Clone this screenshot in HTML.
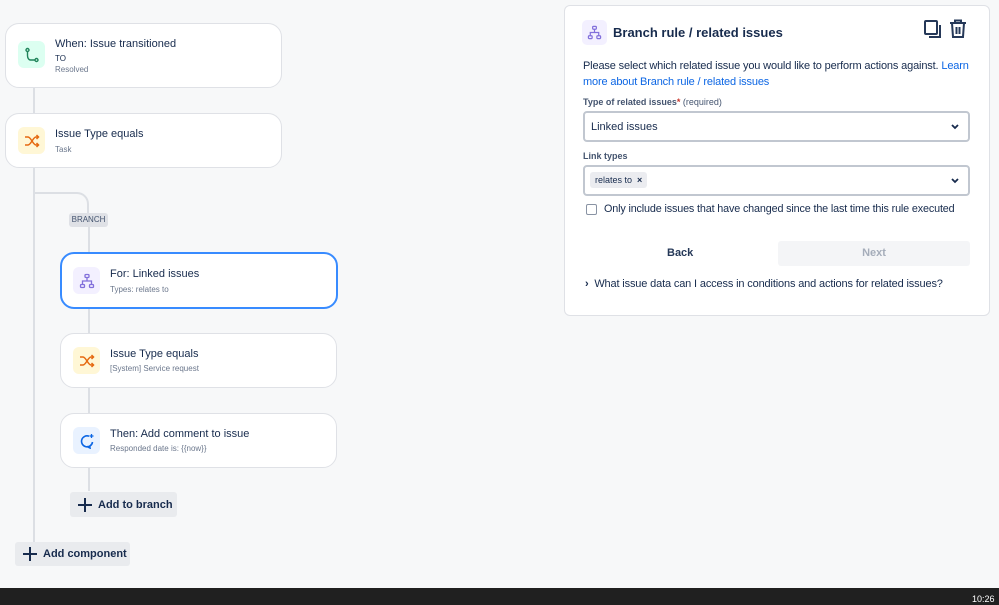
<!DOCTYPE html>
<html><head><meta charset="utf-8"><style>
*{box-sizing:border-box;margin:0;padding:0}
body{width:999px;height:605px;background:#f7f8f9;font-family:"Liberation Sans",Arial,sans-serif;color:#172b4d;position:relative;overflow:hidden;font-size:11px}
.abs{position:absolute}
.card{position:absolute;background:#fff;border:1px solid #dfe1e6;border-radius:14px}
.ic{position:absolute;width:27px;height:27px;border-radius:6px;left:12px;display:flex;align-items:center;justify-content:center}
.t{position:absolute;left:49px;font-size:11px;color:#172b4d}
.s{position:absolute;left:49px;font-size:8px;color:#6b778c}
.vl{position:absolute;width:2px;background:#dcdfe4}
.btn{position:absolute;background:#e9ebee;border-radius:3px;font-size:11px;font-weight:bold;color:#172b4d;display:flex;align-items:center}
.sel{position:absolute;left:583px;width:387px;height:31px;border:2px solid #c1c7d0;border-radius:4px;background:#fff;font-size:11px}
.pn{letter-spacing:-0.15px}
</style></head><body>
<div class="vl" style="left:33px;top:87px;height:456px"></div>
<div class="abs" style="left:33px;top:192px;width:56px;height:22px;border-top:2px solid #dcdfe4;border-right:2px solid #dcdfe4;border-top-right-radius:12px"></div>
<div class="vl" style="left:88px;top:226px;height:265px"></div>
<div class="abs" style="left:69px;top:213px;width:39px;height:14px;background:#dfe1e6;border-radius:3px;font-size:8px;color:#44546f;text-align:center;line-height:14px">BRANCH</div>

<div class="card" style="left:5px;top:23px;width:277px;height:65px">
<div class="ic" style="top:17px;background:#dcfff1"><svg width="16" height="16" viewBox="0 0 16 16" fill="none" stroke="#1f845a" stroke-width="1.4"><circle cx="3.5" cy="3" r="1.5"/><circle cx="12.5" cy="13" r="1.5"/><path d="M3.5 4.5v4c0 2 1 4.5 3 4.5h4.5"/></svg></div>
<div class="t" style="top:14px">When: Issue transitioned</div>
<div class="s" style="top:30px;color:#172b4d;font-size:8px">TO</div>
<div class="s" style="top:41px">Resolved</div></div>

<div class="card" style="left:5px;top:113px;width:277px;height:55px">
<div class="ic" style="top:13px;background:#fff7d6"><svg width="16" height="16" viewBox="0 0 16 16" fill="none" stroke="#e56910" stroke-width="1.5"><path d="M1 4h3c3 0 5 8 8 8h3M1 12h3c3 0 5-8 8-8h3M12.5 2l2 2-2 2M12.5 10l2 2-2 2"/></svg></div>
<div class="t" style="top:14px">Issue Type equals</div>
<div class="s" style="top:31px">Task</div></div>

<div class="card" style="left:60px;top:252px;width:278px;height:57px;border:2px solid #388bff">
<div class="ic" style="top:13px;left:11px;background:#f3f0ff"><svg width="16" height="16" viewBox="0 0 16 16" fill="none" stroke="#8270db" stroke-width="1.3"><rect x="6" y="1.5" width="4" height="3" rx="1"/><rect x="1.5" y="11.5" width="4" height="3" rx="1"/><rect x="10.5" y="11.5" width="4" height="3" rx="1"/><path d="M8 4.5v3.5M3.5 11.5V8h9v3.5"/></svg></div>
<div class="t" style="top:14px;left:48px">For: Linked issues</div>
<div class="s" style="top:31px;left:48px">Types: relates to</div></div>

<div class="card" style="left:60px;top:333px;width:277px;height:55px">
<div class="ic" style="top:13px;background:#fff7d6"><svg width="16" height="16" viewBox="0 0 16 16" fill="none" stroke="#e56910" stroke-width="1.5"><path d="M1 4h3c3 0 5 8 8 8h3M1 12h3c3 0 5-8 8-8h3M12.5 2l2 2-2 2M12.5 10l2 2-2 2"/></svg></div>
<div class="t" style="top:14px">Issue Type equals</div>
<div class="s" style="top:30px">[System] Service request</div></div>

<div class="card" style="left:60px;top:413px;width:277px;height:55px">
<div class="ic" style="top:13px;background:#e9f2ff"><svg width="16" height="16" viewBox="0 0 16 16" fill="none" stroke="#0c66e4" stroke-width="1.6"><path d="M10 3.2A5.5 5.5 0 1 0 13.5 9M8 13.5l3 1.5-.5-2.5"/><path d="M12.5 1v4M10.5 3h4" stroke-width="1.3"/></svg></div>
<div class="t" style="top:14px">Then: Add comment to issue</div>
<div class="s" style="top:30px">Responded date is: {{now}}</div></div>

<div class="btn" style="left:70px;top:492px;width:107px;height:25px"><svg style="margin:0 6px 0 8px" width="14" height="14" viewBox="0 0 14 14" stroke="#172b4d" stroke-width="2"><path d="M7 0v14M0 7h14"/></svg>Add to branch</div>
<div class="btn" style="left:15px;top:542px;width:115px;height:24px"><svg style="margin:0 6px 0 8px" width="14" height="14" viewBox="0 0 14 14" stroke="#172b4d" stroke-width="2"><path d="M7 0v14M0 7h14"/></svg>Add component</div>

<div class="abs" style="left:564px;top:5px;width:426px;height:311px;background:#fff;border:1px solid #dfe1e6;border-radius:6px"></div>
<div class="abs" style="left:582px;top:20px;width:25px;height:25px;border-radius:5px;background:#f3f0ff;display:flex;align-items:center;justify-content:center"><svg width="15" height="15" viewBox="0 0 16 16" fill="none" stroke="#8270db" stroke-width="1.3"><rect x="6" y="1.5" width="4" height="3" rx="1"/><rect x="1.5" y="11.5" width="4" height="3" rx="1"/><rect x="10.5" y="11.5" width="4" height="3" rx="1"/><path d="M8 4.5v3.5M3.5 11.5V8h9v3.5"/></svg></div>
<div class="abs" style="left:613px;top:25px;font-size:13px;font-weight:bold">Branch rule / related issues</div>
<svg class="abs" style="left:924px;top:20px" width="18" height="19" viewBox="0 0 18 19" fill="none" stroke="#253858" stroke-width="2"><rect x="1" y="1" width="12" height="13" rx="1"/><path d="M16 5v12H5"/></svg>
<svg class="abs" style="left:949px;top:19px" width="18" height="20" viewBox="0 0 18 20" fill="none" stroke="#253858" stroke-width="2"><path d="M1 4h16M6 4V1.5h6V4M3 4l1 14h10l1-14M7.5 8v7M10.5 8v7"/></svg>
<div class="abs pn" style="left:583px;top:58px;width:395px;font-size:11px;line-height:16px">Please select which related issue you would like to perform actions against. <span style="color:#0c66e4">Learn more about Branch rule / related issues</span></div>
<div class="abs" style="left:583px;top:97px;font-size:9px;font-weight:bold;color:#44546f">Type of related issues<span style="color:#c9372c">*</span> <span style="font-weight:normal">(required)</span></div>
<div class="sel" style="top:111px"><span class="abs" style="left:6px;top:8px">Linked issues</span><svg class="abs" style="right:9px;top:11px" width="8" height="6" viewBox="0 0 8 6" fill="none" stroke="#172b4d" stroke-width="1.8"><path d="M1 1l3 3 3-3"/></svg></div>
<div class="abs" style="left:583px;top:151px;font-size:9px;font-weight:bold;color:#44546f">Link types</div>
<div class="sel" style="top:165px"><span class="abs" style="left:5px;top:5px;background:#ebecf0;border-radius:3px;height:16px;padding:0 5px;font-size:9px;line-height:16px">relates to &nbsp;<b>×</b></span><svg class="abs" style="right:9px;top:11px" width="8" height="6" viewBox="0 0 8 6" fill="none" stroke="#172b4d" stroke-width="1.8"><path d="M1 1l3 3 3-3"/></svg></div>
<div class="abs" style="left:586px;top:204px;width:11px;height:11px;border:1.5px solid #8993a4;border-radius:2px"></div>
<div class="abs pn" style="left:604px;top:203px;font-size:10.8px;color:#172b4d">Only include issues that have changed since the last time this rule executed</div>
<div class="abs" style="left:667px;top:247px;font-size:11px;font-weight:bold;color:#253858">Back</div>
<div class="abs" style="left:778px;top:241px;width:192px;height:25px;background:#f4f5f7;border-radius:3px;font-size:11px;font-weight:bold;color:#a5adba;text-align:center;line-height:25px">Next</div>
<div class="abs pn" style="left:585px;top:278px;font-size:11px;color:#172b4d"><b>›</b>&nbsp; What issue data can I access in conditions and actions for related issues?</div>

<div class="abs" style="left:0;top:588px;width:999px;height:17px;background:#202020"></div>
<div class="abs" style="left:972px;top:594px;font-size:9px;color:#fff">10:26</div>
</body></html>
